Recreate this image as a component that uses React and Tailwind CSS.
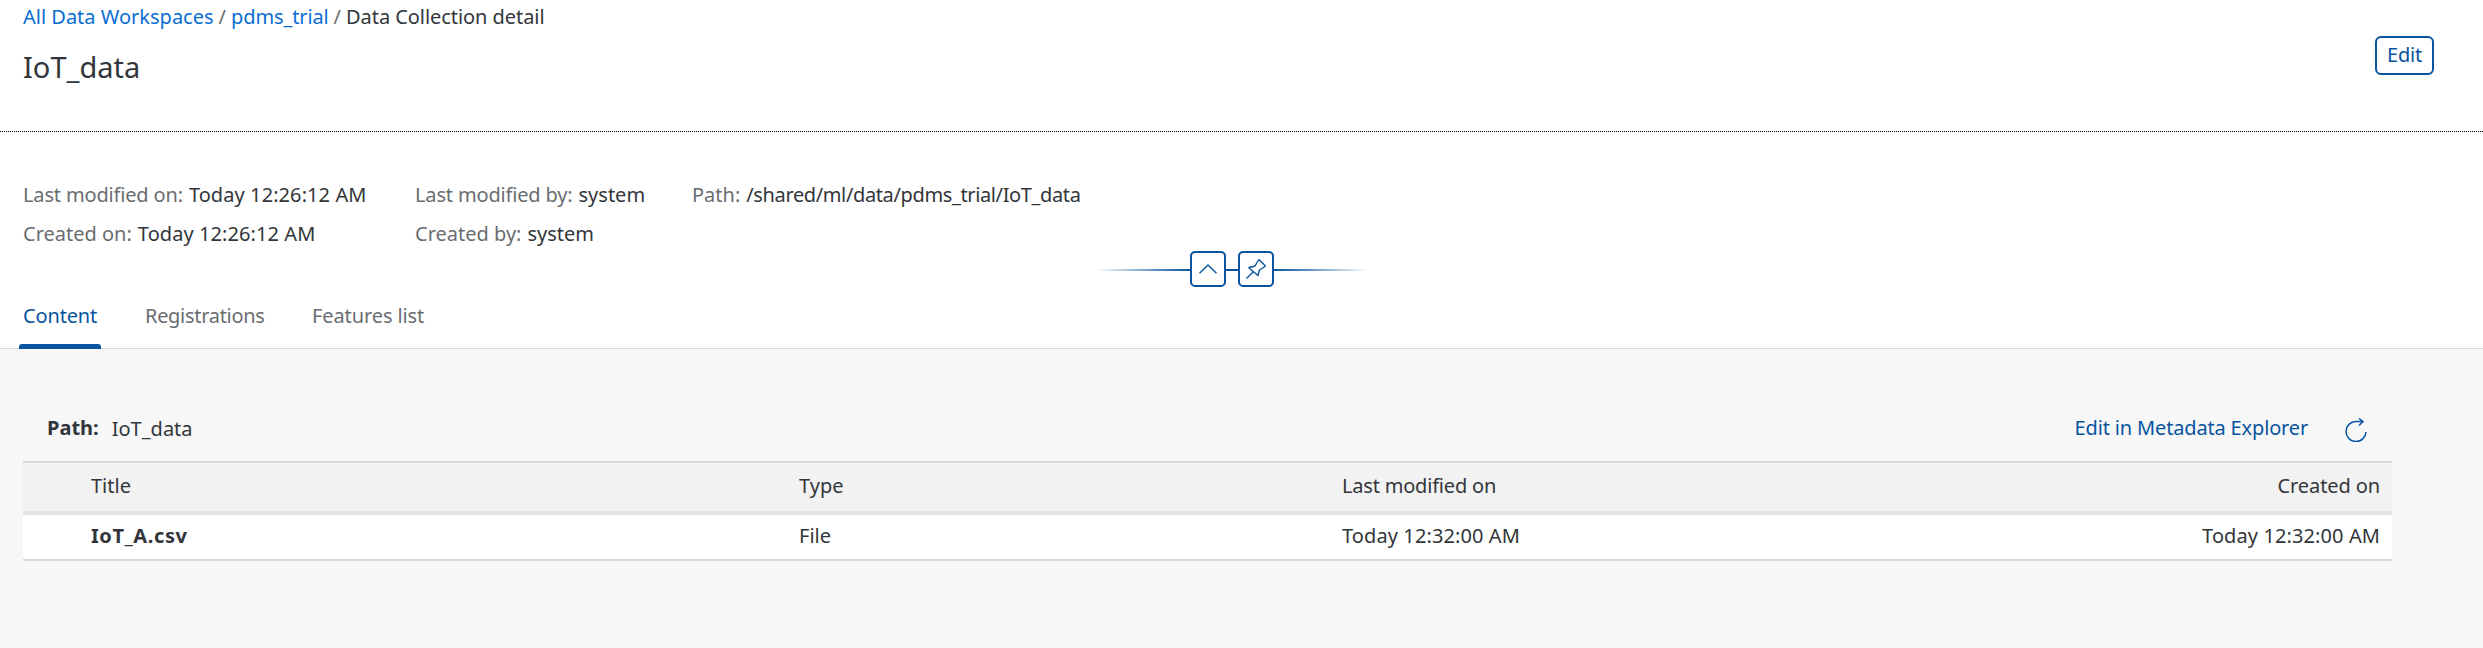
const Link = ({ children, className = "" }) => (
  <a className={`whitespace-pre text-[#0a6ed1] ${className}`}>{children}</a>
);

function Field({ label, value, labelClass = "", valueClass = "" }) {
  return (
    <div className="flex h-[39px] items-center whitespace-pre pt-[1px]">
      <span className={`mr-[6px] text-[#6a6d70] ${labelClass}`}>{label}</span>
      <span className={valueClass}>{value}</span>
    </div>
  );
}

export default function App() {
  return (
    <div className="flex h-[648px] w-[2483px] flex-col overflow-hidden bg-[#f7f7f7] font-['Noto_Sans',sans-serif] text-[20px] text-[#32363a]">
      <header className="flex h-[132px] shrink-0 justify-between border-b border-dotted border-black bg-white pl-[23px] pr-[49px]">
        <div className="flex flex-col">
          <nav className="flex h-[34px] items-center gap-[5px] whitespace-pre">
            <Link>All Data Workspaces</Link>
            <span className="text-[#6a6d70]">/</span>
            <Link className="tracking-[-0.12px]">pdms_trial</Link>
            <span className="text-[#6a6d70]">/</span>
            <span className="tracking-[-0.06px]">Data Collection detail</span>
          </nav>
          <h1 className="flex h-[67px] items-center pb-[2px] text-[29px]">IoT_data</h1>
        </div>
        <button className="mt-[36px] flex h-[39px] w-[59px] items-center justify-center rounded-[6px] border-2 border-[#0854a0] pb-[1px] tracking-[-0.2px] text-[#0854a0]">
          Edit
        </button>
      </header>
      <section className="flex h-[119px] shrink-0 bg-white pl-[23px] pt-[43px]">
        <div className="w-[392px]">
          <Field label="Last modified on:" value="Today 12:26:12 AM" labelClass="tracking-[-0.16px]" valueClass="tracking-[0.08px]" />
          <Field label="Created on:" value="Today 12:26:12 AM" valueClass="tracking-[0.08px]" />
        </div>
        <div className="w-[277px]">
          <Field label="Last modified by:" value="system" labelClass="tracking-[-0.16px]" />
          <Field label="Created by:" value="system" />
        </div>
        <Field label="Path:" value="/shared/ml/data/pdms_trial/IoT_data" valueClass="tracking-[-0.37px]" />
      </section>
      <div className="flex h-[36px] shrink-0 items-center justify-center bg-white pr-[19px]">
        <div className="mt-[2px] h-[2px] w-[95px] bg-linear-to-r from-transparent to-[#0854a0]" />
        <button className="flex size-[36px] shrink-0 items-center justify-center rounded-[5px] border-2 border-[#0854a0]">
          <svg width="18" height="10" viewBox="0 0 18 10" fill="none" stroke="#0854a0" strokeWidth="1.4"><path d="M.5 9.300 9 1l8.500 8.300" /></svg>
        </button>
        <div className="mt-[2px] h-[2px] w-[12px] bg-[#0854a0]" />
        <button className="flex size-[36px] shrink-0 items-center justify-center rounded-[5px] border-2 border-[#0854a0]">
          <svg width="20" height="20" viewBox="0 0 20 20" fill="none" stroke="#0854a0" strokeWidth="1.4" strokeLinejoin="round"><path d="M.5 19.500 7 13M3 8.500 9 7l3.500-6h1L19 6.500v1L13.500 11 12 16.500 3 9z" /></svg>
        </button>
        <div className="mt-[2px] h-[2px] w-[95px] bg-linear-to-l from-transparent to-[#0854a0]" />
      </div>
      <nav className="flex h-[62px] shrink-0 gap-[40px] border-b border-[#d9d9d9] bg-white pl-[19px] text-[#6a6d70]">
        <div className="flex h-[62px] w-[82px] flex-col justify-between text-[#0854a0]">
          <span className="pl-[4px] pt-[14px] tracking-[-0.15px]">Content</span>
          <div className="h-[5px] rounded-t-[3px] bg-[#0854a0]" />
        </div>
        <span className="w-[127px] pl-[4px] pt-[14px] tracking-[-0.3px]">Registrations</span>
        <span className="pl-[4px] pt-[14px] tracking-[-0.1px]">Features list</span>
      </nav>
      <main className="w-[2392px] pl-[23px] pt-[52px]">
        <div className="flex h-[60px] items-center justify-between pl-[24px] pr-[25px]">
          <div className="flex items-center gap-[13px]">
            <b className="pb-[6px]">Path:</b><span className="pb-[4px]">IoT_data</span>
          </div>
          <div className="flex items-center gap-[37px]">
            <span className="pb-[6px] tracking-[-0.16px] text-[#0854a0]">Edit in Metadata Explorer</span>
            <svg className="mb-[2px]" width="22" height="24" viewBox="0 0 22 24" fill="none" stroke="#0854a0" strokeWidth="1.5"><path d="M21 14A10 10 0 1 1 11 3.500h7M14 .5l4 3-4 4" /></svg>
          </div>
        </div>
        <div className="grid h-[54px] grid-cols-[708px_543px_1fr_1fr] items-center border-b-4 border-t-2 border-b-[#e5e5e5] border-t-[#d9d9d9] bg-[#f2f2f2] pb-[2px] pl-[68px] pr-[12px]">
          <span>Title</span><span>Type</span><span className="tracking-[-0.2px]">Last modified on</span><span className="text-right tracking-[-0.1px]">Created on</span>
        </div>
        <div className="grid h-[46px] grid-cols-[708px_543px_1fr_1fr] items-center border-b-2 border-[#d9d9d9] bg-white pb-[2px] pl-[68px] pr-[12px]">
          <b className="tracking-[0.58px]">IoT_A.csv</b><span>File</span><span className="tracking-[0.1px]">Today 12:32:00 AM</span><span className="text-right tracking-[0.1px]">Today 12:32:00 AM</span>
        </div>
      </main>
    </div>
  );
}
